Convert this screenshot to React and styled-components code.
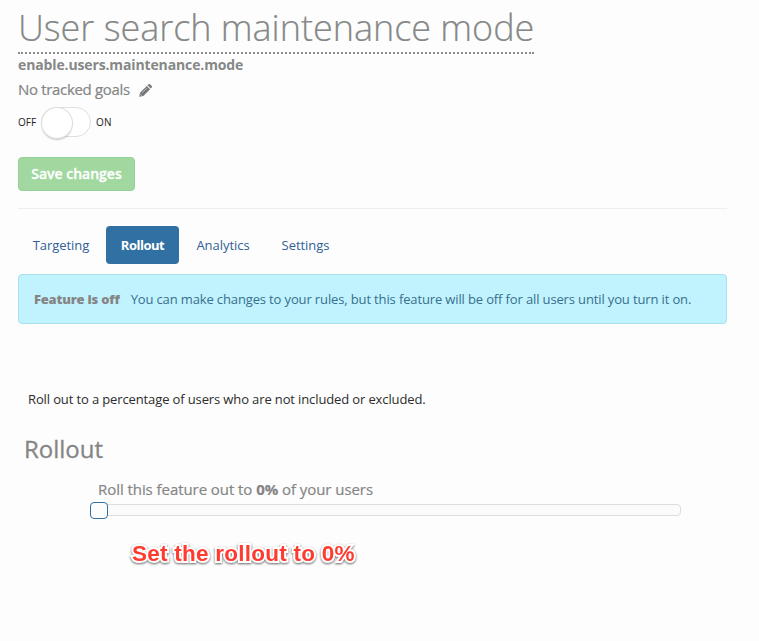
import React, { useState } from "react";
import styled, { createGlobalStyle } from "styled-components";

const GlobalStyle = createGlobalStyle`
  *, *::before, *::after { box-sizing: border-box; }
  body {
    margin: 0;
    background: #fdfdfd;
    color: #2c2c2c;
    font-family: "Open Sans", sans-serif;
    font-size: 13px;
  }
`;

const Page = styled.main`
  display: flex;
  flex-direction: column;
  align-items: flex-start;
  width: 759px;
  height: 641px;
  padding: 2px 32px 0 18px;
  overflow: hidden;
`;

const Title = styled.h1`
  margin: 0;
  width: 516px;
  height: 52px;
  border-bottom: 2px dotted #8a8d8c;
  color: #858887;
  font-size: 36px;
  font-weight: 300;
  letter-spacing: -0.03px;
  line-height: 51px;
  white-space: nowrap;
  -webkit-text-stroke: 0.2px #858887;
`;

const FlagKey = styled.div`
  height: 22px;
  color: #858887;
  font-size: 14px;
  font-weight: 700;
  letter-spacing: -0.13px;
  line-height: 22px;
`;

const Goals = styled.div`
  display: flex;
  align-items: center;
  gap: 9px;
  height: 28px;
  padding-bottom: 2px;
  color: #858585;
  font-size: 15px;
  letter-spacing: -0.33px;
  -webkit-text-stroke: 0.2px #858585;
`;

const SwitchRow = styled.div`
  display: flex;
  align-items: center;
  gap: 5px;
  height: 36px;
  font-size: 10px;
  color: #222;
`;

const SwitchTrack = styled.button`
  width: 50px;
  height: 30px;
  padding: 0;
  border: 1px solid #dfdfdf;
  border-radius: 15px;
  background: #fff;
`;

const SwitchKnob = styled.span`
  display: block;
  width: 30px;
  height: 30px;
  margin-left: ${(p) => (p.$on ? "18px" : "0")};
  border-radius: 50%;
  background: #fff;
  box-shadow: 0 0 0 1px #dedede, 0 2px 2px rgba(0, 0, 0, 0.22);
`;

const SaveButton = styled.button`
  width: 117px;
  height: 34px;
  margin-top: 17px;
  padding: 0 0 1px;
  border: 1px solid #94d297;
  border-radius: 4px;
  background: #a0d8a0;
  color: #fff;
  font-family: inherit;
  font-size: 14px;
  font-weight: 600;
  -webkit-text-stroke: 0.3px #fff;
`;

const Divider = styled.hr`
  width: 709px;
  margin: 17px 0;
  border: 0;
  border-top: 1px solid #eee;
`;

const Tabs = styled.nav`
  display: flex;
  gap: 2px;
`;

const Tab = styled.button`
  height: 38px;
  padding: 0;
  width: ${(p) => p.$width}px;
  border: 0;
  border-radius: 4px;
  background: ${(p) => (p.$active ? "#3170a2" : "transparent")};
  color: ${(p) => (p.$active ? "#fff" : "#315f96")};
  font-family: inherit;
  font-size: 13px;
  font-weight: ${(p) => (p.$active ? 700 : 400)};
  letter-spacing: ${(p) => (p.$active ? "-0.5px" : "-0.05px")};
`;

const Alert = styled.div`
  display: flex;
  align-items: center;
  gap: 11px;
  width: 709px;
  height: 50px;
  margin-top: 10px;
  padding: 0 15px;
  border: 1px solid #a9e1ed;
  border-radius: 4px;
  background: #c1f3ff;
  color: #376f8c;
  letter-spacing: -0.135px;
  white-space: nowrap;
`;

const AlertLabel = styled.strong`
  color: #858585;
  font-weight: 800;
  letter-spacing: -0.22px;
`;

const Description = styled.p`
  margin: 66px 0 0 10px;
  letter-spacing: -0.125px;
  line-height: 18px;
`;

const Heading = styled.h2`
  margin: 24px 0 0 6px;
  color: #858585;
  font-size: 24px;
  font-weight: 400;
  line-height: 34px;
  -webkit-text-stroke: 0.3px #858585;
`;

const SliderLabel = styled.label`
  margin: 13px 0 0 80px;
  color: #858585;
  font-size: 15px;
  letter-spacing: -0.06px;
  line-height: 20px;
  -webkit-text-stroke: 0.2px #858585;
`;

const SliderTrack = styled.div`
  display: flex;
  align-items: center;
  width: 591px;
  height: 12px;
  margin: 5px 0 0 72px;
  border: 1px solid #dedede;
  border-radius: 4px;
  background: #fbfbfb;
`;

const SliderHandle = styled.span`
  flex: none;
  width: 18px;
  height: 17px;
  margin-left: -1px;
  border: 1px solid #3170a2;
  border-radius: 4px;
  background: #fdfdfd;
`;

const Note = styled.div`
  margin: 23px 0 0 114px;
  color: #ff3b30;
  font-family: "Liberation Sans", Arial, sans-serif;
  font-size: 22.5px;
  font-weight: 700;
  letter-spacing: 0.25px;
  line-height: 29px;
  paint-order: stroke fill;
  -webkit-text-stroke: 4px #fff;
  filter: drop-shadow(0 1px 1.2px rgba(0, 0, 0, 0.6));
`;

const tabs = [
  { name: "Targeting", width: 86 },
  { name: "Rollout", width: 73 },
  { name: "Analytics", width: 84 },
  { name: "Settings", width: 77 },
];

const PencilIcon = styled.svg`
  margin-top: 2px;
`;

function Pencil() {
  return (
    <PencilIcon width="13" height="13" viewBox="0 0 13 13" fill="#777">
      <path d="M7.8 1.9 11.1 5.2 4.3 12 .2 12.8 1 8.7Z" />
      <path d="M8.5 1.2 9.5.3q.8-.6 1.5 0l1.7 1.7q.6.7 0 1.5L11.8 4.5Z" />
      <path d="m1.2 10 1.8 1.8M3.1 8.9l4.8-4.8" stroke="#fdfdfd" strokeWidth=".5" />
    </PencilIcon>
  );
}

export default function App() {
  const [on, setOn] = useState(false);
  const [active, setActive] = useState("Rollout");
  return (
    <Page>
      <GlobalStyle />
      <Title>User search maintenance mode</Title>
      <FlagKey>enable.users.maintenance.mode</FlagKey>
      <Goals>
        <span>No tracked goals</span>
        <Pencil />
      </Goals>
      <SwitchRow>
        <span>OFF</span>
        <SwitchTrack onClick={() => setOn(!on)}>
          <SwitchKnob $on={on} />
        </SwitchTrack>
        <span>ON</span>
      </SwitchRow>
      <SaveButton>Save changes</SaveButton>
      <Divider />
      <Tabs>
        {tabs.map(({ name, width }) => (
          <Tab key={name} $width={width} $active={name === active} onClick={() => setActive(name)}>
            {name}
          </Tab>
        ))}
      </Tabs>
      <Alert>
        <AlertLabel>Feature is off</AlertLabel>
        <span>You can make changes to your rules, but this feature will be off for all users until you turn it on.</span>
      </Alert>
      <Description>Roll out to a percentage of users who are not included or excluded.</Description>
      <Heading>Rollout</Heading>
      <SliderLabel>
        Roll this feature out to <b>0%</b> of your users
      </SliderLabel>
      <SliderTrack>
        <SliderHandle />
      </SliderTrack>
      <Note>Set the rollout to 0%</Note>
    </Page>
  );
}
